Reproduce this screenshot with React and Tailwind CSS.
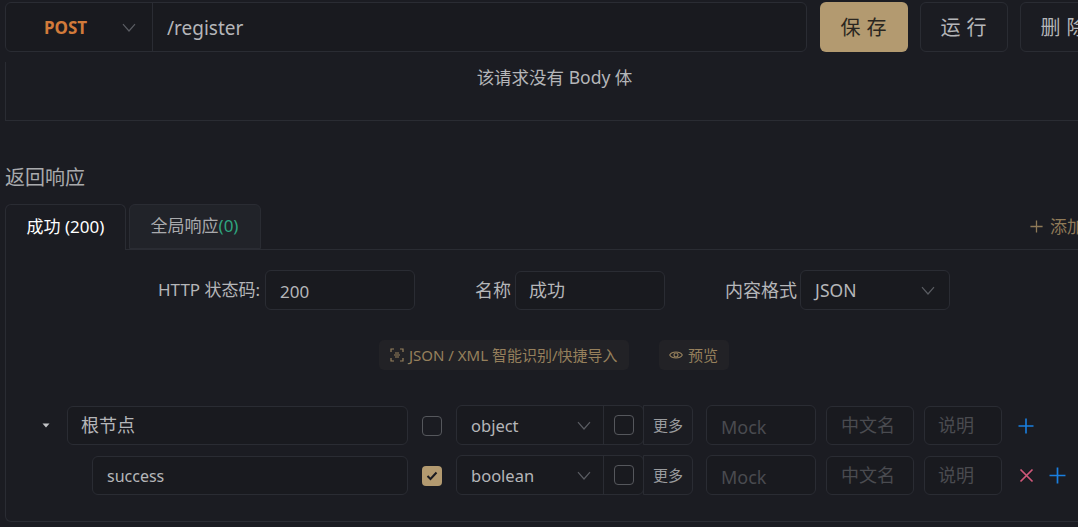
import React from 'react';

const font = { fontFamily: '"Noto Sans", "Noto Sans CJK SC", sans-serif' };

function Chevron({ className = '' }) {
  return (
    <svg width="14" height="9" viewBox="0 0 14 9" fill="none" stroke="#5a5c62" strokeWidth="1.2" className={className}>
      <path d="M1 1.2 L7 8 L13 1.2" />
    </svg>
  );
}

function Box({ className = '', children }) {
  return (
    <div className={`flex items-center border border-[#2a2c33] rounded-[6px] bg-[#191a1f] ${className}`}>
      {children}
    </div>
  );
}

function Check({ checked }) {
  if (checked) {
    return (
      <div className="w-5 h-5 rounded-[4px] bg-[#b39a70] flex items-center justify-center">
        <svg width="12" height="10" viewBox="0 0 12 10" fill="none" stroke="#1b1c22" strokeWidth="2">
          <path d="M1.5 5 L4.5 8 L10.5 1.5" />
        </svg>
      </div>
    );
  }
  return <div className="w-5 h-5 rounded-[4px] border border-[#55575c]" />;
}

function Plus({ color, size = 16 }) {
  return (
    <svg width={size} height={size} viewBox="0 0 16 16" fill="none" stroke={color} strokeWidth="1.6">
      <path d="M8 0.5 V15.5 M0.5 8 H15.5" />
    </svg>
  );
}

function Row({ indent, name, checked, type, del }) {
  return (
    <div className="flex items-stretch h-10">
      {indent ? (
        <div className="w-[86px]" />
      ) : (
        <div className="w-[61px] flex items-center pl-[36px]">
          <svg width="8" height="5" viewBox="0 0 8 5" fill="#c4c5c8"><path d="M0.5 0.5 H7.5 L4 4.5 Z" /></svg>
        </div>
      )}
      <Box className={`${indent ? 'w-[316px] text-[16px] pl-[14px]' : 'w-[341px] text-[18px] pl-[13px]'} h-[39px] self-end text-[#b5b6b9]`}>{name}</Box>
      <div className="w-[48px] flex items-center justify-center pt-[1px]"><Check checked={checked} /></div>
      <div className="flex w-[188px] h-10 border border-[#2a2c33] rounded-[6px] bg-[#191a1f]">
        <div className="flex-1 flex items-center justify-between pl-[14px] pr-[12px] text-[16.5px] text-[#b5b6b9] border-r border-[#2a2c33]">
          <span className="pt-[3px]">{type}</span>
          <Chevron />
        </div>
        <div className="w-[39px] flex items-center justify-center"><Check /></div>
      </div>
      <div className="w-[50px] h-10 -ml-[1px] border border-[#2a2c33] rounded-r-[6px] flex items-center justify-center text-[15px] text-[#9a9b9e]">更多</div>
      <Box className="w-[110px] h-10 ml-[13px] pl-[14px] pt-[5px] text-[18px] text-[#4a4b50]">Mock</Box>
      <Box className="w-[88px] h-[39px] self-end ml-[10px] pl-[14px] text-[18px] text-[#4a4b50]">中文名</Box>
      <Box className="w-[78px] h-[39px] self-end ml-[10px] pl-[13px] text-[18px] text-[#4a4b50]">说明</Box>
      <div className="flex items-center ml-[16px] gap-[15px] pt-[1px]">
        {del && (
          <svg width="15" height="15" viewBox="0 0 15 15" fill="none" stroke="#d0587a" strokeWidth="1.7" className="ml-[1px]">
            <path d="M1.5 1.5 L13.5 13.5 M13.5 1.5 L1.5 13.5" />
          </svg>
        )}
        <Plus color="#1a7fe0" size={del ? 17 : 16} />
      </div>
    </div>
  );
}

export default function App() {
  return (
    <div style={font} className="w-[1078px] h-[527px] overflow-hidden bg-[#1b1c22]">
      <div className="w-[1140px] pl-[5px] pt-[2px]">
        {/* URL bar */}
        <div className="flex h-[50px]">
          <div className="w-[802px] flex border border-[#2a2c33] rounded-[6px] bg-[#191a1f]">
            <div className="w-[147px] shrink-0 flex items-center justify-between pl-[38px] pr-[16px] border-r border-[#2a2c33]">
              <span className="pt-[1px] text-[17px] font-bold text-[#d27a3a]">POST</span>
              <Chevron />
            </div>
            <div className="flex items-center pl-[14px] pt-[2px] text-[19px] text-[#b5b6b9]">/register</div>
          </div>
          <div className="ml-[13px] w-[88px] pl-[5px] pt-[2px] rounded-[6px] bg-[#b39a70] text-[#2a2620] text-[20px] tracking-[6px] flex items-center justify-center">保存</div>
          <div className="ml-[12px] w-[88px] pl-[5px] pt-[2px] rounded-[6px] border border-[#2a2c33] text-[#b5b6b9] text-[20px] tracking-[6px] flex items-center justify-center">运行</div>
          <div className="ml-[12px] w-[88px] pl-[5px] pt-[2px] rounded-[6px] border border-[#2a2c33] text-[#b5b6b9] text-[20px] tracking-[6px] flex items-center justify-center">删除</div>
        </div>

        {/* Empty body */}
        <div className="mt-[10px] h-[59px] border-l border-b border-[#2a2c33] text-center">
          <div className="pt-[1px] text-[17.5px] leading-[28px] text-[#b5b6b9] w-[1097px]">该请求没有 Body 体</div>
        </div>

        {/* Heading */}
        <div className="mt-[43px] text-[20px] leading-[28px] text-[#a9aaad]">返回响应</div>

        {/* Tabs */}
        <div className="mt-[12px] flex h-[46px] relative">
          <div className="w-[121px] h-[46px] z-10 pb-[1px] rounded-t-[6px] border border-[#2a2c33] border-b-0 bg-[#1b1c22] flex items-center justify-center text-[17px] text-white">成功 (200)</div>
          <div className="w-[132px] ml-[3px] h-[45px] pr-[1px] pb-[1px] rounded-t-[6px] border border-[#2a2c33] bg-[#212329] flex items-center justify-center text-[17px] text-[#a9aaad]">
            全局响应<span className="text-[#2fa57f]">(0)</span>
          </div>
          <div className="absolute left-0 right-0 top-[45px] h-px bg-[#2a2c33]" />
          <div className="absolute left-[1025px] top-[10px] flex items-center gap-[7px] text-[17px] text-[#8f7a58] whitespace-nowrap">
            <Plus color="#8f7a58" size={13} />添加
          </div>
        </div>

        {/* Panel */}
        <div className="h-[272px] border-l border-b border-[#2a2c33] rounded-bl-[6px]">
          {/* form */}
          <div className="flex items-center pt-[20px] pl-[152px] text-[17px] text-[#b5b6b9]">
            <span>HTTP 状态码:</span>
            <Box className="ml-[5px] w-[150px] h-10 pl-[14px]"><span className="pt-[3px]">200</span></Box>
            <span className="ml-[60px] text-[18px]">名称</span>
            <Box className="ml-[4px] w-[150px] h-[39px] pl-[13px] mt-[1px] text-[18px]">成功</Box>
            <span className="ml-[60px] text-[18px]">内容格式</span>
            <Box className="ml-[3px] w-[150px] h-10 pl-[14px] pr-[14px] justify-between text-[17.5px]"><span>JSON</span><Chevron /></Box>
          </div>

          {/* import */}
          <div className="mt-[30px] flex pl-[373px] text-[15px] text-[#96805c]">
            <div className="h-[30px] w-[250px] rounded-[5px] bg-[#222226] flex items-center pl-[11px] gap-[5px] whitespace-nowrap">
              <svg width="14" height="14" viewBox="0 0 14 14" fill="none" stroke="#96805c" strokeWidth="1.2">
                <path d="M1 4 V1 H4 M10 1 H13 V4 M13 10 V13 H10 M4 13 H1 V10 M4 7 H10 M5 5 H9 M5 9 H9" />
              </svg>
              JSON / XML 智能识别/快捷导入
            </div>
            <div className="h-[30px] w-[70px] ml-[30px] rounded-[5px] bg-[#222226] flex items-center pl-[10px] gap-[5px] whitespace-nowrap">
              <svg width="14" height="10" viewBox="0 0 14 10" fill="none" stroke="#96805c" strokeWidth="1.1">
                <path d="M0.7 5 C3 1 11 1 13.3 5 C11 9 3 9 0.7 5 Z" />
                <circle cx="7" cy="5" r="2" />
              </svg>
              预览
            </div>
          </div>

          {/* tree */}
          <div className="mt-[35px] flex flex-col gap-[10px]">
            <Row name="根节点" type="object" />
            <Row indent name="success" checked type="boolean" del />
          </div>
        </div>
      </div>
    </div>
  );
}
